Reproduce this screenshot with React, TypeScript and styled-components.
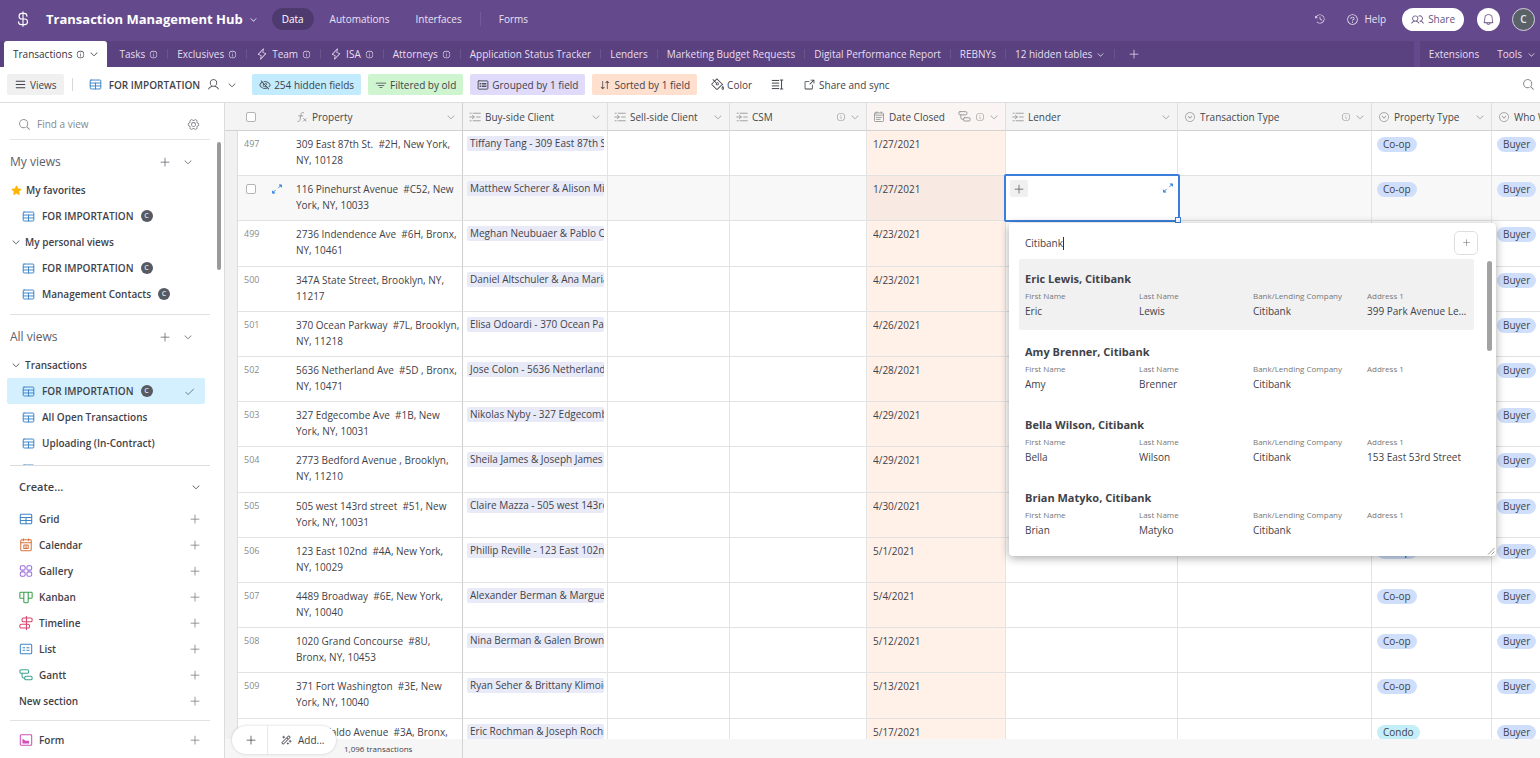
import React from "react";
import styled, { createGlobalStyle, css } from "styled-components";
import {
  PiArrowsDownUp, PiArrowSquareOut, PiBell, PiCaretCircleDown, PiCaretDown, PiCheck,
  PiClockCounterClockwise, PiCurrencyDollar, PiEyeSlash, PiFunnelSimple, PiGearSix, PiInfo, PiLightning,
  PiList, PiMagicWand, PiMagnifyingGlass, PiPaintBucket, PiPlus, PiQuestion, PiStarFill,
  PiUser, PiUsers,
} from "react-icons/pi";

const GlobalStyle = createGlobalStyle`
  *, *::before, *::after { box-sizing: border-box; }
  body {
    margin: 0;
    overflow: hidden;
    font-family: "Open Sans", "Noto Sans", sans-serif;
    font-size: 10px;
    line-height: 16px;
    color: #3f4249;
    background: #fff;
  }
  button, input { font: inherit; color: inherit; }
  button { border: 0; padding: 0; background: none; cursor: pointer; }
  svg { display: block; flex: none; }
`;

/* ---------- drawn icons ---------- */

const shapes: Record<string, React.ReactNode> = {
  grid: <><rect x="1.5" y="2.5" width="13" height="11" rx="1" /><path d="M1.5 6.2h13M1.5 9.8h13M8 6.2v7.3" /></>,
  calendar: <><rect x="2" y="2" width="12" height="12.5" rx="1" /><path d="M2 5.5h12M5 1v2M11 1v2M5.5 8h5v4h-5zM8 8v4" /></>,
  gallery: <><rect x="1.5" y="2" width="5.5" height="5" rx="1.7" /><rect x="9" y="2" width="5.5" height="5" rx="1.7" /><rect x="1.5" y="9" width="5.5" height="5" rx="1.7" /><rect x="9" y="9" width="5.5" height="5" rx="1.7" /></>,
  kanban: <path d="M2 2.5h12a1 1 0 0 1 1 1v5a1 1 0 0 1-1 1h-3.5v4a1 1 0 0 1-1 1h-3a1 1 0 0 1-1-1v-4H2a1 1 0 0 1-1-1v-5a1 1 0 0 1 1-1zM5.5 2.5v7M10.5 2.5v7" />,
  timeline: <><rect x="3.5" y="2.2" width="11.5" height="4.3" rx="1.5" /><rect x="1" y="9.5" width="11" height="4.3" rx="1.5" /><path d="M8.5.5v15" /></>,
  list: <><rect x="1.5" y="2.5" width="13" height="11" rx="1.2" /><path d="M4.5 6.5h2M4.5 9.5h2M9 6.5h2.5M9 9.5h2.5" /></>,
  gantt: <><rect x="1" y="2" width="10" height="4" rx="1.5" /><rect x="6.5" y="9.5" width="8.5" height="4" rx="1.5" /><path d="M3.5 6v3.5a2 2 0 0 0 2 2h1" /></>,
  form: <><rect x="1.5" y="2" width="13" height="12" rx="1" /><path d="M4.5 11.5V7.5l3 2h3.5v2z" fill="currentColor" /></>,
  link: <path d="M5.5 3H15M10 8H15M5.5 13H15M1 8h6M4.5 5.8L7 8 4.5 10.2M1.5 3h1.5M1.5 13h1.5" />,
  formula: <path d="M10 2.2c-2-.7-2.8.3-3.2 2L5.3 11.8c-.4 1.8-1.3 2.6-3 2M3.5 6.5h5.5M10 10l3.5 3.5M13.5 10L10 13.5" />,
  date: <><rect x="2" y="2.5" width="12" height="11.5" rx="1" /><path d="M2 5.5h12M5 1v2M11 1v2M4.5 8.5h7M4.5 11.2h5" /></>,
  rowHeight: <path d="M1.5 3h8M1.5 6.3h8M1.5 9.7h8M1.5 13h8M13 3v10M11.5 2.5h3M11.5 13.5h3" />,
  group: <><rect x="1.5" y="2.5" width="13" height="11" rx="1" /><path d="M4 6h1M4 8h1M4 10h1M7 6h5M7 8h5M7 10h5" /></>,
  expand: <path d="M11.5 2.5h2.500v2.500zM13 3.500L10 6.500M4.500 13.500H2V11zM3 12.500L6 9.500" fill="currentColor" />,
};

function Shape({ name, size = 12, color }: { name: string; size?: number; color?: string }) {
  return (
    <svg width={size} height={size} viewBox="0 0 16 16" fill="none" stroke="currentColor" color={color} strokeWidth="1.2" strokeLinejoin="round" strokeLinecap="round" aria-hidden="true">
      {shapes[name]}
    </svg>
  );
}

/* ---------- frame ---------- */

const Page = styled.div`
  display: flex;
  flex-direction: column;
  height: 100vh;
`;

const TopBar = styled.header`
  display: flex;
  align-items: center;
  flex: none;
  height: 41px;
  padding: 0 5px 3px 14px;
  background: #644a8c;
  color: #e9e3f2;
  font-weight: 500;
`;

const BaseName = styled.button`
  display: flex;
  align-items: center;
  gap: 6px;
  margin: 0 14px 0 14px;
  color: #fff;
  font-size: 13px;
  font-weight: 700;
`;

const NavLink = styled.a<{ $active?: boolean }>`
  padding: 3px 10px;
  margin-right: 6px;
  border-radius: 12px;
  color: inherit;
  text-decoration: none;
  ${(p) => p.$active && css`background: #4f3a70; color: #fff;`}
`;

const NavRule = styled.span`
  width: 1px;
  height: 14px;
  margin: 0 8px 0 2px;
  background: #725b98;
`;

const Spacer = styled.div`flex: 1;`;

const TopButton = styled.button`
  display: flex;
  align-items: center;
  gap: 5px;
  margin-left: 20px;
`;

const ShareButton = styled.button`
  display: flex;
  align-items: center;
  gap: 4px;
  height: 23px;
  padding: 0 9px;
  margin: 0 13px 0 16px;
  border-radius: 12px;
  background: #fff;
  color: #65527f;
`;

const RoundButton = styled.button<{ $dark?: boolean }>`
  display: grid;
  place-items: center;
  width: 23px;
  height: 23px;
  border-radius: 50%;
  background: #fff;
  color: #65527f;
  ${(p) => p.$dark && css`margin-left: 12px; border: 1px solid #d6cfe0; background: #5a6268; color: #e8ebee; font-weight: 600;`}
`;

const TabBar = styled.nav`
  display: flex;
  flex: none;
  gap: 6px;
  height: 26px;
  background: #644a8c;
  color: #e6dff0;
  font-weight: 500;
`;

const TabGroup = styled.div<{ $grow?: boolean }>`
  display: flex;
  align-items: center;
  background: #5a417f;
  ${(p) => p.$grow ? css`flex: 1; padding-left: 4px; border-radius: 0 2px 0 0;` : css`gap: 18px; padding: 0 4px 0 9px; border-radius: 2px 0 0 0;`}
`;

const Tab = styled.button<{ $active?: boolean; $add?: boolean }>`
  position: relative;
  display: flex;
  align-items: center;
  gap: 4px;
  height: 26px;
  padding: 0 10px 0 ${(p) => (p.$add ? 13 : 9)}px;
  white-space: nowrap;
  ${(p) => p.$active
    ? css`padding: 0 8px 0 9px; margin-right: 3px; border-radius: 3px 3px 0 0; background: #fff; color: #35313c;`
    : css`&:not(:last-child)::after { content: ""; position: absolute; right: 0; top: 8px; height: 10px; width: 1px; background: #6b5390; }`}
`;

const SideTool = styled.button`
  display: flex;
  align-items: center;
  gap: 5px;
`;

const Toolbar = styled.div`
  display: flex;
  align-items: center;
  flex: none;
  height: 36px;
  padding: 0 5px 0 7px;
  border-bottom: 1px solid #dedede;
`;

const ToolButton = styled.button<{ $bg?: string; $strong?: boolean }>`
  display: flex;
  align-items: center;
  gap: 3px;
  height: 21px;
  padding: 0 7px;
  margin-right: ${(p) => (p.$bg ? 7 : 5)}px;
  border-radius: 2px;
  background: ${(p) => p.$bg ?? "transparent"};
  white-space: nowrap;
  ${(p) => p.$strong && css`gap: 7px; margin-right: 8px; font-weight: 600;`}
`;

const ToolRule = styled.span`
  width: 1px;
  height: 13px;
  margin: 0 9px 0 1px;
  background: #d8d8d8;
`;

const Body = styled.div`
  display: flex;
  flex: 1;
  min-height: 0;
`;

/* ---------- side panel ---------- */

const Side = styled.aside`
  position: relative;
  display: flex;
  flex-direction: column;
  flex: none;
  width: 225px;
  border-right: 1px solid #dcdcdc;
  font-weight: 600;
`;

const FindRow = styled.label`
  display: flex;
  align-items: center;
  flex: none;
  gap: 6px;
  height: 37px;
  padding: 6px 10px 0 8px;
  margin: 0 14px 0 10px;
  border-bottom: 1px solid #e4e4e4;
  color: #7b7f85;
  font-weight: 400;
  input {
    flex: 1;
    min-width: 0;
    padding: 0;
    border: 0;
    outline: 0;
    background: none;
  }
  input::placeholder { color: #85888e; opacity: 1; }
`;

const ViewScroll = styled.div`
  flex: 1;
  min-height: 0;
  overflow: hidden;
`;

const ScrollThumb = styled.span`
  position: absolute;
  top: 39px;
  right: 3px;
  width: 4px;
  height: 128px;
  border-radius: 2px;
  background: #9a9a9a;
`;

const SectionHead = styled.div<{ $next?: boolean }>`
  display: flex;
  align-items: center;
  gap: 12px;
  height: 37px;
  padding: 6px 17px 0 0;
  margin: 0 14px 0 10px;
  color: #5d6068;
  font-size: 12px;
  font-weight: 500;
  ${(p) => p.$next && css`height: 38px; margin-top: 7px; border-top: 1px solid #e0e0e0;`}
`;

const Folder = styled.button`
  display: flex;
  align-items: center;
  gap: 4px;
  width: 100%;
  height: 26px;
  padding-left: 11px;
  font-weight: 600;
`;

const ViewItem = styled.button<{ $active?: boolean }>`
  display: flex;
  align-items: center;
  gap: 7px;
  width: 198px;
  height: 26px;
  padding: 0 10px 0 15px;
  margin-left: 7px;
  border-radius: 2px;
  background: ${(p) => (p.$active ? "#d4f0fe" : "transparent")};
  font-weight: 600;
  & > :last-child:not(span) { margin-left: auto; }
`;

const Initial = styled.i`
  display: grid;
  place-items: center;
  width: 12px;
  height: 12px;
  border-radius: 50%;
  background: #555a63;
  color: #e4e5e8;
  font-size: 7px;
  font-style: normal;
  line-height: 12px;
`;

const ViewName = styled.span`
  display: flex;
  align-items: center;
  gap: 7px;
`;

const CreatePanel = styled.div`
  flex: none;
  margin: 0 14px 0 10px;
  border-top: 1px solid #dcdcdc;
`;

const CreateHead = styled.button`
  display: flex;
  align-items: center;
  justify-content: space-between;
  width: 100%;
  height: 40px;
  padding: 2px 9px 0 9px;
  font-size: 11px;
  font-weight: 600;
`;

const CreateItem = styled.button<{ $last?: boolean }>`
  display: flex;
  align-items: center;
  gap: 6px;
  width: 100%;
  height: 26px;
  padding: 0 9px;
  font-weight: 600;
  svg:last-child { margin-left: auto; color: #777; }
  ${(p) => p.$last && css`height: 38px; margin-top: 6px; border-top: 1px solid #e2e2e2;`}
`;

/* ---------- data table ---------- */

const Main = styled.main`
  position: relative;
  display: flex;
  flex-direction: column;
  flex: 1;
  min-width: 0;
  background: #f1f1f1;
`;

const TableArea = styled.div`
  flex: 1;
  min-height: 0;
  overflow: hidden;
`;

const Table = styled.table`
  width: 100%;
  height: calc(100% + 25px);
  table-layout: fixed;
  border-spacing: 0;
`;

const Col = styled.col<{ $w?: number }>`
  width: ${(p) => (p.$w ? `${p.$w}px` : "auto")};
`;

const Th = styled.th<{ $bare?: boolean; $pinned?: boolean; $tint?: boolean }>`
  height: 28px;
  padding: 0 6px;
  overflow: hidden;
  border-right: ${(p) => (p.$bare ? "0" : `1px solid ${p.$pinned ? "#cfcfcf" : "#dedede"}`)};
  border-bottom: 1px solid #d2d2d2;
  background: ${(p) => (p.$tint ? "#faf5f2" : "#f4f4f4")};
  font-weight: 500;
  text-align: left;
`;

const HeadInner = styled.div`
  display: flex;
  align-items: center;
  gap: 4px;
  white-space: nowrap;
  color: #999;
  b { font-weight: 500; color: #44474d; margin-right: auto; }
`;

const Row = styled.tr<{ $hover?: boolean }>`
  background: ${(p) => (p.$hover ? "#f8f8f8" : "#fff")};
`;

const Td = styled.td<{ $bare?: boolean; $pinned?: boolean; $tint?: string; $edit?: boolean }>`
  position: relative;
  height: 45px;
  padding: 5px ${(p) => (p.$pinned ? 2 : 3)}px 0 6px;
  border-right: ${(p) => (p.$bare ? "0" : `1px solid ${p.$pinned ? "#cfcfcf" : "#e4e4e4"}`)};
  border-bottom: 1px solid #e2e2e2;
  vertical-align: top;
  background: ${(p) => p.$tint ?? "transparent"};
  ${(p) => p.$edit && css`z-index: 2;`}
`;

const Gutter = styled.td`
  border-right: 1px solid #dcdcdc;
  background: #f1f1f1;
`;

const Lines = styled.div<{ $muted?: boolean }>`
  height: 32px;
  overflow: hidden;
  white-space: pre-wrap;
  ${(p) => p.$muted && css`color: #8b8b8b; font-size: 9px;`}
`;

const RecordChip = styled.div`
  height: 15px;
  margin-left: -2px;
  padding-left: 3px;
  overflow: hidden;
  border-radius: 2px;
  background: #e8eaf8;
  line-height: 15px;
  white-space: nowrap;
`;

const Pill = styled.span<{ $bg: string }>`
  display: inline-block;
  height: 15px;
  padding: 0 6px;
  margin-left: -1px;
  border-radius: 8px;
  background: ${(p) => p.$bg};
  line-height: 15px;
`;

const Check = styled.input`
  appearance: none;
  display: block;
  width: 10px;
  height: 10px;
  margin: 0;
  border: 1px solid #b4b4b4;
  border-radius: 2px;
  background: #fff;
`;

const RowTools = styled.div`
  display: flex;
  align-items: center;
  justify-content: space-between;
  height: 15px;
  padding: 0 4px 0 2px;
  color: #3a86e0;
`;

const EditFrame = styled.div`
  position: absolute;
  inset: -2px -3px -2px -2px;
  display: flex;
  align-items: flex-start;
  justify-content: space-between;
  padding: 4px;
  border: 2px solid #3a7fdb;
  border-radius: 2px;
  background: #fff;
  color: #3a86e0;
  &::after {
    content: "";
    position: absolute;
    right: -3px;
    bottom: -3px;
    width: 6px;
    height: 6px;
    border: 1px solid #3a7fdb;
    background: #fff;
  }
`;

const AddLink = styled.button`
  display: grid;
  place-items: center;
  width: 18px;
  height: 17px;
  border-radius: 2px;
  background: #f0f0f0;
  color: #555;
`;

const ExpandCell = styled.button`
  padding: 2px 0 0;
`;

/* ---------- record picker ---------- */

const Picker = styled.div`
  position: absolute;
  top: 47px;
  left: 3px;
  z-index: 3;
  width: 487px;
  height: 333px;
  overflow: hidden;
  border-radius: 4px;
  background: #fff;
  box-shadow: 0 2px 10px rgba(0, 0, 0, 0.35);
`;

const PickerHead = styled.div`
  display: flex;
  align-items: center;
  height: 36px;
  padding: 3px 18px 0 16px;
  input {
    flex: 1;
    padding: 0;
    border: 0;
    outline: 0;
    background: none;
  }
  button {
    display: grid;
    place-items: center;
    width: 24px;
    height: 24px;
    border: 1px solid #dedede;
    border-radius: 5px;
    color: #666;
  }
`;

const Card = styled.div<{ $active?: boolean }>`
  display: grid;
  grid-template-columns: repeat(4, 114px);
  align-content: start;
  width: 455px;
  height: 71px;
  padding: 11px 0 0 6px;
  margin: 0 0 2px 10px;
  overflow: hidden;
  border-radius: 2px;
  background: ${(p) => (p.$active ? "#f1f1f1" : "transparent")};
  h3 {
    grid-column: 1 / -1;
    height: 18px;
    margin: 0;
    font-size: 11px;
    font-weight: 700;
    line-height: 17px;
  }
`;

const Field = styled.dl`
  margin: 0;
  padding-right: 12px;
  line-height: 16px;
  dt { height: 16px; color: #777; font-size: 8px; white-space: nowrap; }
  dd { height: 16px; margin: 0; line-height: 15px; overflow: hidden; text-overflow: ellipsis; white-space: nowrap; }
`;

const PickerThumb = styled.span`
  position: absolute;
  top: 38px;
  right: 4px;
  width: 5px;
  height: 90px;
  border-radius: 3px;
  background: #a2a2a2;
`;

const Grip = styled.svg`
  position: absolute;
  right: 1px;
  bottom: 1px;
`;

const Caret = styled.span`
  position: absolute;
  top: 14px;
  left: 54px;
  width: 1px;
  height: 13px;
  background: #333;
`;

/* ---------- footer ---------- */

const Footer = styled.footer`
  flex: none;
  height: 19px;
  background: #f6f6f6;
  font-size: 8px;
  font-weight: 500;
  line-height: 19px;
  div { width: 238px; height: 19px; padding-left: 119px; border-right: 1px solid #d4d4d4; }
`;

const AddBar = styled.div`
  position: absolute;
  left: 7px;
  bottom: 4px;
  z-index: 4;
  display: flex;
  height: 28px;
  border-radius: 14px;
  background: #fff;
  box-shadow: 0 0 3px rgba(0, 0, 0, 0.18);
  font-weight: 500;
  button { display: flex; align-items: center; gap: 6px; padding: 0 12px; }
  button:first-child { padding: 0 10px 0 13px; border-right: 1px solid #e8e8e8; }
`;

/* ---------- data ---------- */

const tabs: { name: string; info?: boolean; sync?: boolean; caret?: boolean }[] = [
  { name: "Tasks", info: true },
  { name: "Exclusives", info: true },
  { name: "Team", info: true, sync: true },
  { name: "ISA", info: true, sync: true },
  { name: "Attorneys", info: true },
  { name: "Application Status Tracker" },
  { name: "Lenders" },
  { name: "Marketing Budget Requests" },
  { name: "Digital Performance Report" },
  { name: "REBNYs" },
  { name: "12 hidden tables", caret: true },
];

const creators: [string, string, string][] = [
  ["grid", "#3f86c8", "Grid"],
  ["calendar", "#d9743f", "Calendar"],
  ["gallery", "#9a6ee0", "Gallery"],
  ["kanban", "#35a04c", "Kanban"],
  ["timeline", "#d8446e", "Timeline"],
  ["list", "#3f86c8", "List"],
  ["gantt", "#3da38f", "Gantt"],
];

const columns: { name: string; icon: string; width?: number; info?: boolean; dep?: boolean; pinned?: boolean; tint?: boolean; last?: boolean }[] = [
  { name: "Property", icon: "formula", width: 173, pinned: true },
  { name: "Buy-side Client", icon: "link", width: 145 },
  { name: "Sell-side Client", icon: "link", width: 122 },
  { name: "CSM", icon: "link", width: 137, info: true },
  { name: "Date Closed", icon: "date", width: 139, info: true, dep: true, tint: true },
  { name: "Lender", icon: "link", width: 172 },
  { name: "Transaction Type", icon: "select", width: 194, info: true },
  { name: "Property Type", icon: "select", width: 120 },
  { name: "Who We Represent", icon: "select", last: true },
];

const rows: [number, string, string, string, string][] = [
  [497, "309 East 87th St.  #2H, New York, NY, 10128", "Tiffany Tang - 309 East 87th St", "1/27/2021", "Co-op"],
  [498, "116 Pinehurst Avenue  #C52, New York, NY, 10033", "Matthew Scherer & Alison Miller", "1/27/2021", "Co-op"],
  [499, "2736 Indendence Ave  #6H, Bronx, NY, 10461", "Meghan Neubuaer & Pablo Cruz", "4/23/2021", "Co-op"],
  [500, "347A State Street, Brooklyn, NY, 11217", "Daniel Altschuler & Ana Maria", "4/23/2021", "Co-op"],
  [501, "370 Ocean Parkway  #7L, Brooklyn, NY, 11218", "Elisa Odoardi - 370 Ocean Parkway", "4/26/2021", "Co-op"],
  [502, "5636 Netherland Ave  #5D , Bronx, NY, 10471", "Jose Colon - 5636 Netherland Ave", "4/28/2021", "Co-op"],
  [503, "327 Edgecombe Ave  #1B, New York, NY, 10031", "Nikolas Nyby - 327 Edgecombe", "4/29/2021", "Co-op"],
  [504, "2773 Bedford Avenue , Brooklyn, NY, 11210", "Sheila James & Joseph James", "4/29/2021", "Co-op"],
  [505, "505 west 143rd street  #51, New York, NY, 10031", "Claire Mazza - 505 west 143rd", "4/30/2021", "Co-op"],
  [506, "123 East 102nd  #4A, New York, NY, 10029", "Phillip Reville - 123 East 102nd", "5/1/2021", "Co-op"],
  [507, "4489 Broadway  #6E, New York, NY, 10040", "Alexander Berman & Marguerite", "5/4/2021", "Co-op"],
  [508, "1020 Grand Concourse  #8U, Bronx, NY, 10453", "Nina Berman & Galen Brown", "5/12/2021", "Co-op"],
  [509, "371 Fort Washington  #3E, New York, NY, 10040", "Ryan Seher & Brittany Klimoicz", "5/13/2021", "Co-op"],
  [510, "3810 Waldo Avenue  #3A, Bronx, NY, 10463", "Eric Rochman & Joseph Rochman", "5/17/2021", "Condo"],
];

const lenders = [
  ["Eric", "Lewis", "399 Park Avenue Level 12"],
  ["Amy", "Brenner", ""],
  ["Bella", "Wilson", "153 East 53rd Street"],
  ["Brian", "Matyko", ""],
];

/* ---------- parts ---------- */

function NamedView({ name, owner, active }: { name: string; owner?: boolean; active?: boolean }) {
  return (
    <ViewItem $active={active}>
      <Shape name="grid" size={13} color="#3f86c8" />
      <ViewName>{name}{owner && <Initial>C</Initial>}</ViewName>
      {active && <PiCheck size={11} color="#6d7d87" />}
    </ViewItem>
  );
}

function SidePanel() {
  return (
    <Side>
      <FindRow>
        <PiMagnifyingGlass size={13} />
        <input placeholder="Find a view" aria-label="Find a view" />
        <PiGearSix size={13} />
      </FindRow>
      <ScrollThumb />
      <ViewScroll>
        <SectionHead>My views<Spacer /><PiPlus size={12} /><PiCaretDown size={10} /></SectionHead>
        <Folder><PiStarFill size={11} color="#ffb400" />My favorites</Folder>
        <NamedView name="FOR IMPORTATION" owner />
        <Folder><PiCaretDown size={10} />My personal views</Folder>
        <NamedView name="FOR IMPORTATION" owner />
        <NamedView name="Management Contacts" owner />
        <SectionHead $next>All views<Spacer /><PiPlus size={12} /><PiCaretDown size={10} /></SectionHead>
        <Folder><PiCaretDown size={10} />Transactions</Folder>
        <NamedView name="FOR IMPORTATION" owner active />
        <NamedView name="All Open Transactions" />
        <NamedView name="Uploading (In-Contract)" />
        <NamedView name="Uploading (Closed)" />
      </ViewScroll>
      <CreatePanel>
        <CreateHead>Create...<PiCaretDown size={10} /></CreateHead>
        {creators.map(([icon, color, name]) => (
          <CreateItem key={name}><Shape name={icon} size={14} color={color} />{name}<PiPlus size={12} /></CreateItem>
        ))}
        <CreateItem>New section<PiPlus size={12} /></CreateItem>
        <CreateItem $last><Shape name="form" size={14} color="#d04fb8" />Form<PiPlus size={12} /></CreateItem>
      </CreatePanel>
    </Side>
  );
}

function LenderPicker() {
  return (
    <Picker role="dialog" aria-label="Link a lender">
      <PickerHead>
        <input defaultValue="Citibank" aria-label="Find a lender" />
        <button aria-label="New lender"><PiPlus size={9} /></button>
      </PickerHead>
      <Caret />
      {lenders.map(([first, last, address], i) => (
        <Card key={first} $active={i === 0}>
          <h3>{first} {last}, Citibank</h3>
          <Field><dt>First Name</dt><dd>{first}</dd></Field>
          <Field><dt>Last Name</dt><dd>{last}</dd></Field>
          <Field><dt>Bank/Lending Company</dt><dd>Citibank</dd></Field>
          <Field><dt>Address 1</dt><dd>{address}</dd></Field>
        </Card>
      ))}
      <PickerThumb />
      <Grip width="8" height="8" viewBox="0 0 8 8" stroke="#999"><path d="M1 7.5L7.5 1M4.5 7.5L7.5 4.5" /></Grip>
    </Picker>
  );
}

function DataTable() {
  return (
    <Table>
      <colgroup>
        <Col $w={13} />
        <Col $w={52} />
        {columns.map((c) => <Col key={c.name} $w={c.width} />)}
      </colgroup>
      <thead>
        <tr>
          <Th $bare />
          <Th $bare><RowTools><Check type="checkbox" aria-label="Select all rows" /></RowTools></Th>
          {columns.map((c) => (
            <Th key={c.name} $pinned={c.pinned} $tint={c.tint} $bare={c.last}>
              <HeadInner>
                {c.icon === "select" ? <PiCaretCircleDown size={12} /> : <Shape name={c.icon} />}
                <b>{c.name}</b>
                {c.dep && <Shape name="gantt" size={13} />}
                {c.info && <PiInfo size={10} />}
                {!c.last && <PiCaretDown size={10} />}
              </HeadInner>
            </Th>
          ))}
        </tr>
      </thead>
      <tbody>
        {rows.map(([id, property, client, date, kind]) => {
          const hover = id === 498;
          return (
            <Row key={id} $hover={hover}>
              <Gutter />
              <Td $bare>
                {hover
                  ? <RowTools><Check type="checkbox" aria-label="Select row 498" /><Shape name="expand" /></RowTools>
                  : <Lines $muted>{id}</Lines>}
              </Td>
              <Td $pinned><Lines>{property}</Lines></Td>
              <Td><RecordChip>{client}</RecordChip></Td>
              <Td />
              <Td />
              <Td $tint={hover ? "#f8eae3" : "#fff0e8"}><Lines>{date}</Lines></Td>
              <Td $edit={hover}>
                {hover && (
                  <>
                    <EditFrame>
                      <AddLink aria-label="Add lender"><PiPlus size={12} /></AddLink>
                      <ExpandCell aria-label="Expand cell"><Shape name="expand" /></ExpandCell>
                    </EditFrame>
                    <LenderPicker />
                  </>
                )}
              </Td>
              <Td />
              <Td><Pill $bg={kind === "Condo" ? "#c4eef8" : "#cfdffb"}>{kind}</Pill></Td>
              <Td $bare><Pill $bg="#cfdffb">Buyer</Pill></Td>
            </Row>
          );
        })}
      </tbody>
    </Table>
  );
}

export default function App() {
  return (
    <Page>
      <GlobalStyle />
      <TopBar>
        <PiCurrencyDollar size={18} color="#fff" />
        <BaseName>Transaction Management Hub<PiCaretDown size={9} /></BaseName>
        <NavLink href="#data" $active>Data</NavLink>
        <NavLink href="#automations">Automations</NavLink>
        <NavLink href="#interfaces">Interfaces</NavLink>
        <NavRule />
        <NavLink href="#forms">Forms</NavLink>
        <Spacer />
        <TopButton aria-label="History"><PiClockCounterClockwise size={12} /></TopButton>
        <TopButton><PiQuestion size={13} />Help</TopButton>
        <ShareButton><PiUsers size={13} />Share</ShareButton>
        <RoundButton aria-label="Notifications"><PiBell size={13} /></RoundButton>
        <RoundButton $dark aria-label="Account">C</RoundButton>
      </TopBar>
      <TabBar>
        <TabGroup $grow>
          <Tab $active>Transactions<PiInfo size={9} /><PiCaretDown size={10} /></Tab>
          {tabs.map((t) => (
            <Tab key={t.name}>
              {t.sync && <PiLightning size={12} />}
              {t.name}
              {t.info && <PiInfo size={9} />}
              {t.caret && <PiCaretDown size={9} />}
            </Tab>
          ))}
          <Tab $add aria-label="Add table"><PiPlus size={12} /></Tab>
        </TabGroup>
        <TabGroup>
          <SideTool>Extensions</SideTool>
          <SideTool>Tools<PiCaretDown size={9} /></SideTool>
        </TabGroup>
      </TabBar>
      <Toolbar>
        <ToolButton $bg="#f0f0f0"><PiList size={13} />Views</ToolButton>
        <ToolRule />
        <ToolButton $strong><Shape name="grid" size={13} color="#3f86c8" />FOR IMPORTATION<PiUser size={13} /><PiCaretDown size={10} /></ToolButton>
        <ToolButton $bg="#c2ebfd"><PiEyeSlash size={12} />254 hidden fields</ToolButton>
        <ToolButton $bg="#cff4d0"><PiFunnelSimple size={12} />Filtered by old</ToolButton>
        <ToolButton $bg="#e0dafb"><Shape name="group" />Grouped by 1 field</ToolButton>
        <ToolButton $bg="#ffdfcd"><PiArrowsDownUp size={12} />Sorted by 1 field</ToolButton>
        <ToolButton><PiPaintBucket size={13} />Color</ToolButton>
        <ToolButton aria-label="Row height"><Shape name="rowHeight" size={13} /></ToolButton>
        <ToolButton><PiArrowSquareOut size={13} />Share and sync</ToolButton>
        <Spacer />
        <PiMagnifyingGlass size={13} color="#777" />
      </Toolbar>
      <Body>
        <SidePanel />
        <Main>
          <TableArea><DataTable /></TableArea>
          <Footer><div>1,096 transactions</div></Footer>
          <AddBar>
            <button aria-label="Add record"><PiPlus size={12} /></button>
            <button><PiMagicWand size={12} />Add...</button>
          </AddBar>
        </Main>
      </Body>
    </Page>
  );
}
